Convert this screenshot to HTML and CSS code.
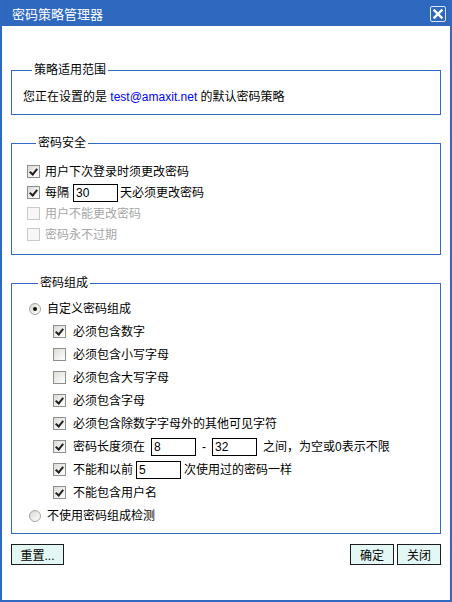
FILE: index.html
```html
<!DOCTYPE html>
<html lang="zh-CN">
<head>
  <meta charset="UTF-8" />
  <title>密码策略管理器</title>
  <link rel="stylesheet" href="styles.css">
</head>
<body>
  <div class="window">
    <div class="titlebar">
      <span class="title">密码策略管理器</span>
      <span class="close">
        <svg width="16" height="16" viewBox="0 0 16 16">
          <rect x="0.5" y="0.5" width="15" height="15" rx="1.5" fill="none" stroke="#dbe5f6" />
          <path d="M4.5 4.5 L11.5 11.5 M11.5 4.5 L4.5 11.5" stroke="#fff" stroke-width="2.4" stroke-linecap="square" />
        </svg>
      </span>
    </div>

    <div class="content">
      <fieldset class="group scope">
        <legend>策略适用范围</legend>
        <p class="scope-text">您正在设置的是 <a class="email">test@amaxit.net</a> 的默认密码策略</p>
      </fieldset>

      <fieldset class="group security">
        <legend>密码安全</legend>
        <label class="row"><span class="check on"></span>用户下次登录时须更改密码</label>
        <label class="row"><span class="check on"></span>每隔<input class="field f-days" type="text" value="30" />天必须更改密码</label>
        <label class="row off"><span class="check"></span>用户不能更改密码</label>
        <label class="row off"><span class="check"></span>密码永不过期</label>
      </fieldset>

      <fieldset class="group compose">
        <legend>密码组成</legend>
        <label class="row"><span class="radio on"></span>自定义密码组成</label>
        <label class="row sub"><span class="check on"></span>必须包含数字</label>
        <label class="row sub"><span class="check"></span>必须包含小写字母</label>
        <label class="row sub"><span class="check"></span>必须包含大写字母</label>
        <label class="row sub"><span class="check on"></span>必须包含字母</label>
        <label class="row sub"><span class="check on"></span>必须包含除数字字母外的其他可见字符</label>
        <label class="row sub"><span class="check on"></span>密码长度须在<input class="field f-len" type="text" value="8" /><span class="dash">-</span><input class="field" type="text" value="32" /><span class="after-len">之间，为空或0表示不限</span></label>
        <label class="row sub"><span class="check on"></span>不能和以前<input class="field f-hist" type="text" value="5" /><span class="after-hist">次使用过的密码一样</span></label>
        <label class="row sub"><span class="check on"></span>不能包含用户名</label>
        <label class="row"><span class="radio"></span>不使用密码组成检测</label>
      </fieldset>

      <div class="actions">
        <button class="btn btn-reset">重置...</button>
        <span class="spacer"></span>
        <button class="btn">确定</button>
        <button class="btn">关闭</button>
      </div>
    </div>
  </div>
</body>
</html>
```

FILE: styles.css
```css
body {
  margin: 0;
  font-family: "Liberation Sans", "Noto Sans CJK SC", sans-serif;
  font-size: 12px;
  line-height: 1;
  color: #000;
  background: #fff;
}
.window {
  width: 452px;
  height: 602px;
  box-sizing: border-box;
  border: 2px solid #2f6ac0;
  border-top: 0;
}
.titlebar {
  height: 26px;
  background: #2e69bf;
  display: flex;
  align-items: center;
  justify-content: space-between;
  padding: 0 4px 0 10px;
  color: #fff;
}
.title {
  font-size: 13px;
  line-height: 15px;
  padding-top: 2px;
}
.close {
  display: flex;
  width: 16px;
  height: 16px;
  margin-top: 2px;
}
.content {
  padding: 37px 9px 0;
}
.group {
  margin: 0;
  border: 1px solid #316ac5;
  min-width: 0;
}
.group legend {
  margin-left: 9px;
  padding: 0 2px;
  line-height: 15px;
}
.scope {
  padding: 9px 11px 7px;
}
.scope-text {
  margin: 0;
  line-height: 20px;
}
.email {
  color: #0000ff;
}
.group.security {
  margin-top: 21px;
  padding: 10px 0 9px 15px;
}
.group.compose {
  margin-top: 21px;
  padding: 6px 0 6px 17px;
}
.row {
  display: flex;
  align-items: center;
  height: 21px;
  white-space: nowrap;
}
.compose .row {
  height: 23px;
}
.row.sub {
  margin-left: 24px;
}
.row.off {
  color: #a6a6a6;
}
.check {
  width: 13px;
  height: 13px;
  box-sizing: border-box;
  border: 1px solid #8d8f8f;
  background: linear-gradient(135deg, #dcdcd6, #ffffff);
  display: flex;
  align-items: center;
  justify-content: center;
  margin-right: 5px;
  flex-shrink: 0;
}
.sub .check {
  margin-right: 7px;
}
.check.on::after {
  content: "";
  width: 3px;
  height: 6px;
  border: solid #222;
  border-width: 0 2px 2px 0;
  transform: rotate(40deg);
  margin-top: -2px;
}
.row.off .check {
  border-color: #c9c9c9;
  background: #f7f7f7;
}
.radio {
  width: 12px;
  height: 12px;
  box-sizing: border-box;
  border-radius: 50%;
  border: 1px solid #a4a4a4;
  background: linear-gradient(135deg, #d8d8d2, #ffffff);
  display: flex;
  align-items: center;
  justify-content: center;
  margin-right: 6px;
  flex-shrink: 0;
}
.radio.on::after {
  content: "";
  width: 4px;
  height: 4px;
  border-radius: 50%;
  background: #111;
}
.field {
  width: 45px;
  height: 18px;
  box-sizing: border-box;
  border: 1px solid #000;
  padding: 0 2px;
  margin: 0;
  font-family: "Liberation Sans", sans-serif;
  font-size: 12px;
  color: #000;
  background: #fff;
}
.f-days {
  margin: 0 2px 0 4px;
}
.f-len {
  margin-left: 6px;
}
.dash {
  margin: 0 6px;
}
.after-len {
  margin-left: 6px;
}
.f-hist {
  margin: 0 3px;
}
.actions {
  margin-top: 10px;
  display: flex;
  gap: 3px;
}
.spacer {
  flex: 1;
}
.btn {
  width: 44px;
  height: 21px;
  padding: 0;
  border: 1px solid #1c1c1c;
  background: #e3f8f4;
  font-family: "Liberation Sans", "Noto Sans CJK SC", sans-serif;
  font-size: 12px;
  color: #000;
}
.btn-reset {
  width: 53px;
}
```
